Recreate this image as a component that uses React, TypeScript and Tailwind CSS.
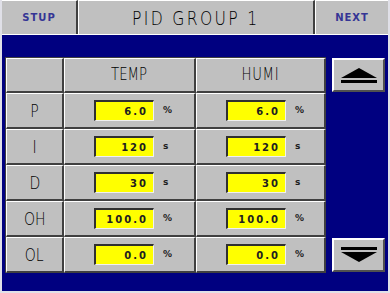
import React from 'react'

interface Row {
  label: string
  temp: string
  humi: string
  unit: string
}

const rows: Row[] = [
  { label: 'P', temp: '6.0', humi: '6.0', unit: '%' },
  { label: 'I', temp: '120', humi: '120', unit: 's' },
  { label: 'D', temp: '30', humi: '30', unit: 's' },
  { label: 'OH', temp: '100.0', humi: '100.0', unit: '%' },
  { label: 'OL', temp: '0.0', humi: '0.0', unit: '%' },
]

const thin = { fontFamily: '"DejaVu Sans", sans-serif' }
const wide = { fontFamily: '"DejaVu Sans", Verdana, sans-serif' }

function ValueBox({ value, unit }: { value: string; unit: string }) {
  return (
    <div className="flex items-center pl-[29px]">
      <div
        className="w-[60px] h-[21px] bg-[#ffff00] border-t-2 border-l-2 border-r border-b border-t-[#303030] border-l-[#303030] border-r-[#f0f0f0] border-b-[#f0f0f0] flex items-center justify-end pr-[5px] text-[10px] font-bold tracking-[2px] text-[#202020]"
        style={wide}
      >
        {value}
      </div>
      <span className="ml-[9px] text-[9px] font-bold text-[#202020]" style={wide}>
        {unit}
      </span>
    </div>
  )
}

function Cell({ children, className = '' }: { children?: React.ReactNode; className?: string }) {
  return (
    <div
      className={`bg-[#c0c0c0] border-t border-l border-r-2 border-b-2 border-t-white border-l-white border-r-[#404040] border-b-[#404040] flex items-center ${className}`}
    >
      {children}
    </div>
  )
}

function ArrowButton({ dir }: { dir: 'up' | 'down' }) {
  return (
    <div className="w-[53px] h-[34px] bg-[#c0c0c0] border-t-2 border-l-2 border-r-2 border-b-2 border-t-white border-l-white border-r-[#505050] border-b-[#505050] flex items-center justify-center">
      <svg width="38" height="18" viewBox="0 0 38 18">
        {dir === 'up' ? (
          <>
            <polygon points="19,2 37,12 1,12" fill="#000" />
            <rect x="1" y="14" width="36" height="3" fill="#000" />
          </>
        ) : (
          <>
            <rect x="1" y="1" width="36" height="3" fill="#000" />
            <polygon points="1,6 37,6 19,16" fill="#000" />
          </>
        )}
      </svg>
    </div>
  )
}

export default function App() {
  return (
    <div className="w-[390px] h-[293px] bg-[#000080] border-l-2 border-r-2 border-b-2 border-[#e0e0e8] flex flex-col overflow-hidden">
      {/* top bar */}
      <div className="h-[35px] flex bg-[#c0c0c0] border-b border-b-white">
        <div className="w-[76px] flex items-center justify-center border-r-2 border-r-[#404040] border-t border-t-white">
          <span className="text-[10px] font-bold tracking-[1px] text-[#353595]" style={wide}>STUP</span>
        </div>
        <div className="flex-1 flex items-center justify-center border-l border-l-white border-r-2 border-r-[#404040] border-t border-t-white">
          <span className="text-[20px] font-extralight tracking-[3px] text-black inline-block scale-x-[0.78]" style={thin}>PID GROUP 1</span>
        </div>
        <div className="w-[73px] flex items-center justify-center border-l border-l-white border-t border-t-white">
          <span className="text-[10px] font-bold tracking-[1px] text-[#353595]" style={wide}>NEXT</span>
        </div>
      </div>

      <div className="flex pl-[3px] pt-[22px] gap-[6px]">
        {/* table */}
        <div className="grid grid-cols-[58px_132px_130px] grid-rows-[35px_repeat(5,36px)] border-t border-l border-[#404040]">
          <Cell />
          <Cell className="justify-center">
            <span className="text-[17px] font-extralight text-black inline-block scale-x-[0.78]" style={thin}>TEMP</span>
          </Cell>
          <Cell className="justify-center">
            <span className="text-[17px] font-extralight tracking-[1px] text-black inline-block scale-x-[0.78]" style={thin}>HUMI</span>
          </Cell>
          {rows.map(row => (
            <React.Fragment key={row.label}>
              <Cell className="justify-center">
                <span className="text-[18px] font-extralight text-black inline-block scale-x-[0.78]" style={thin}>{row.label}</span>
              </Cell>
              <Cell>
                <ValueBox value={row.temp} unit={row.unit} />
              </Cell>
              <Cell>
                <ValueBox value={row.humi} unit={row.unit} />
              </Cell>
            </React.Fragment>
          ))}
        </div>

        {/* scroll buttons */}
        <div className="flex flex-col justify-between h-[215px] pt-px">
          <ArrowButton dir="up" />
          <ArrowButton dir="down" />
        </div>
      </div>
    </div>
  )
}
